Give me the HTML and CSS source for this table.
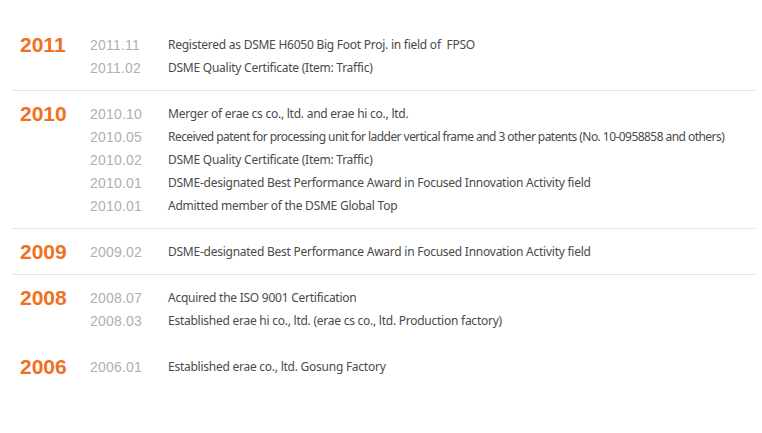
FILE: index.html
```html
<!DOCTYPE html>
<html>
<head>
<meta charset="utf-8">
<link rel="stylesheet" href="styles.css">
</head>
<body>
<div class="history">
  <section class="year-block">
    <div class="year">2011</div>
    <ul class="events">
      <li><span class="date">2011.11</span><span class="desc">Registered as DSME H6050 Big Foot Proj. in field of&nbsp; FPSO</span></li>
      <li><span class="date">2011.02</span><span class="desc">DSME Quality Certificate (Item: Traffic)</span></li>
    </ul>
  </section>
  <section class="year-block">
    <div class="year">2010</div>
    <ul class="events">
      <li><span class="date">2010.10</span><span class="desc">Merger of erae cs co., ltd. and erae hi co., ltd.</span></li>
      <li><span class="date">2010.05</span><span class="desc desc-long">Received patent for processing unit for ladder vertical frame and 3 other patents (No. 10-0958858 and others)</span></li>
      <li><span class="date">2010.02</span><span class="desc">DSME Quality Certificate (Item: Traffic)</span></li>
      <li><span class="date">2010.01</span><span class="desc">DSME-designated Best Performance Award in Focused Innovation Activity field</span></li>
      <li><span class="date">2010.01</span><span class="desc">Admitted member of the DSME Global Top</span></li>
    </ul>
  </section>
  <section class="year-block">
    <div class="year">2009</div>
    <ul class="events">
      <li><span class="date">2009.02</span><span class="desc">DSME-designated Best Performance Award in Focused Innovation Activity field</span></li>
    </ul>
  </section>
  <section class="year-block no-line">
    <div class="year">2008</div>
    <ul class="events">
      <li><span class="date">2008.07</span><span class="desc">Acquired the ISO 9001 Certification</span></li>
      <li><span class="date">2008.03</span><span class="desc">Established erae hi co., ltd. (erae cs co., ltd. Production factory)</span></li>
    </ul>
  </section>
  <section class="year-block no-line">
    <div class="year">2006</div>
    <ul class="events">
      <li><span class="date">2006.01</span><span class="desc">Established erae co., ltd. Gosung Factory</span></li>
    </ul>
  </section>
</div>
</body>
</html>
```
FILE: styles.css
```css
html, body {
  margin: 0;
  padding: 0;
  background: #fff;
}
.history {
  margin: 22px 7px 0 12px;
}
.year-block {
  display: flex;
  padding: 11px 0 11px 8px;
  border-bottom: 1px solid #e3e3e3;
}
.year-block.no-line {
  border-bottom-color: transparent;
}
.year {
  flex: 0 0 70px;
  font-family: "Liberation Sans", Arial, sans-serif;
  font-weight: bold;
  font-size: 21px;
  line-height: 23px;
  color: #f07021;
}
.events {
  flex: 1;
  list-style: none;
  margin: 0;
  padding: 0;
}
.events li {
  display: flex;
  height: 23px;
  align-items: center;
  white-space: nowrap;
}
.date {
  flex: 0 0 78px;
  font-family: "Liberation Sans", Arial, sans-serif;
  font-size: 14px;
  letter-spacing: 0.2px;
  color: #b0b0b0;
}
.desc {
  font-family: "Noto Sans", sans-serif;
  font-size: 12px;
  letter-spacing: -0.25px;
  color: #4a4a4a;
}
.desc-long {
  letter-spacing: -0.55px;
}
```
